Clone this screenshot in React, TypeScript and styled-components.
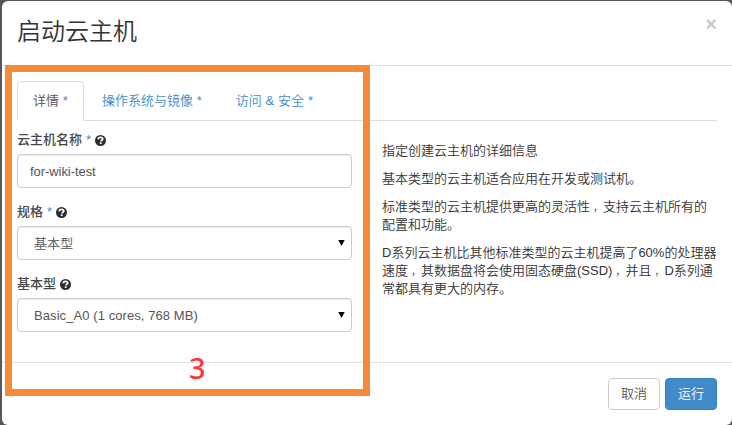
import React from 'react';
import styled, { createGlobalStyle } from 'styled-components';

const GlobalStyle = createGlobalStyle`
  *, *::before, *::after { box-sizing: border-box; }
  body {
    margin: 0;
    background: #58585a;
    overflow: hidden;
    color: #333;
    font: 350 13px/18px "Liberation Sans", "Noto Sans CJK SC", sans-serif;
  }
`;

const Backdrop = styled.div`
  height: 425px;
  padding: 1px 0 0 2px;
`;

const Modal = styled.section`
  position: relative;
  height: 424px;
  background: #fff;
  border-radius: 6px;
  display: flex;
  flex-direction: column;
`;

const Header = styled.header`
  height: 65px;
  flex: none;
  display: flex;
  justify-content: space-between;
  padding: 15px 15px 0;
  border-bottom: 1px solid #e2e2e2;
`;

const Title = styled.h3`
  margin: 0;
  font-size: 24px;
  line-height: 32px;
  font-weight: 350;
`;

const Close = styled.button`
  height: 18px;
  padding: 0;
  margin-top: -1px;
  border: 0;
  background: none;
  color: #c8c8c8;
  font: bold 19.5px/18px "Liberation Sans", sans-serif;
`;

const Body = styled.div`
  height: 297px;
  flex: none;
  padding: 15px 15px 0;
  border-bottom: 1px solid #e2e2e2;
`;

const Tabs = styled.nav`
  display: flex;
  gap: 2px;
  height: 40px;
  border-bottom: 1px solid #ddd;
`;

const Tab = styled.a<{ $active?: boolean }>`
  height: 40px;
  padding: 10px 15px 0;
  white-space: nowrap;
  word-spacing: 0.2px;
  border: 1px solid;
  border-color: ${p => (p.$active ? '#ddd #ddd #fff' : 'transparent')};
  border-radius: 4px 4px 0 0;
  background: ${p => (p.$active ? '#fff' : 'transparent')};
  color: ${p => (p.$active ? '#555' : '#428bca')};
`;

const Columns = styled.div`
  display: grid;
  grid-template-columns: 335px 335px;
  column-gap: 30px;
  padding-top: 10px;
`;

const Group = styled.div`
  height: 72px;
`;

const Label = styled.label`
  display: flex;
  align-items: center;
  gap: 4px;
  height: 18px;
  margin-bottom: 5px;
  font-weight: 500;
  color: #484848;
`;

const Star = styled.span`
  color: #428bca;
  font-weight: 400;
`;

const Field = styled.div<{ $select?: boolean }>`
  display: flex;
  align-items: center;
  justify-content: space-between;
  height: 34px;
  padding: 0 6px 0 ${p => (p.$select ? 16 : 12)}px;
  border: 1px solid #ccc;
  border-radius: 4px;
  box-shadow: inset 0 1px 1px rgba(0, 0, 0, 0.075);
  letter-spacing: ${p => (p.$select ? 0.08 : -0.06)}px;
  color: #555;
`;

const Value = styled.span`
  padding-top: 2px;
`;

const Description = styled.div`
  padding-top: 11px;
`;

const Paragraph = styled.p`
  margin: 0 0 10px;
  white-space: nowrap;
`;

const Comma = styled.span`
  padding-left: 3px;
  font-size: 10px;
  line-height: 1;
`;

const Footer = styled.footer`
  display: flex;
  justify-content: flex-end;
  gap: 5px;
  padding: 15px 15px 0;
`;

const Button = styled.button<{ $primary?: boolean }>`
  width: 52px;
  height: 32px;
  padding: 0;
  border: 1px solid ${p => (p.$primary ? '#357ebd' : '#ccc')};
  border-radius: 4px;
  background: ${p => (p.$primary ? '#428bca' : '#fff')};
  color: ${p => (p.$primary ? '#fff' : '#555')};
  font: inherit;
`;

const Highlight = styled.div`
  position: absolute;
  left: 3px;
  top: 64px;
  width: 365px;
  height: 331px;
  border: 7px solid #f78a38;
  pointer-events: none;
`;

const Step = styled.span`
  position: absolute;
  left: 177px;
  top: 280px;
  color: #ff3636;
  font: 500 29px/32px "Noto Sans", sans-serif;
`;

const Help = () => (
  <svg width="11" height="11" viewBox="0 0 11 11">
    <circle cx="5.5" cy="5.5" r="5.5" fill="#2d2d2d" />
    <path d="M3.2 4.3C3.3 2.8 4.2 2.3 5.5 2.3c1.3 0 2.2.7 2.2 1.7C7.7 5.2 6 5.2 6 6.6" fill="none" stroke="#fff" strokeWidth="1.8" />
    <path d="M4.8 7.4h1.8v1.6H4.8z" fill="#fff" />
  </svg>
);

const Arrow = () => (
  <svg width="7" height="6" viewBox="0 0 7 6">
    <path d="M.3 0h6.4L3.5 6z" fill="#000" />
  </svg>
);

const Line = ({ text }: { text: string }) => (
  <>
    {text.split('，').map((part, i) => (
      <React.Fragment key={part}>
        {i > 0 && <Comma>，</Comma>}
        {part}
      </React.Fragment>
    ))}
  </>
);

const TABS = ['详情', '操作系统与镜像', '访问 & 安全'];

const FIELDS = [
  { label: '云主机名称', required: true, value: 'for-wiki-test', select: false },
  { label: '规格', required: true, value: '基本型', select: true },
  { label: '基本型', required: false, value: 'Basic_A0 (1 cores, 768 MB)', select: true },
];

const DESCRIPTION = [
  ['指定创建云主机的详细信息'],
  ['基本类型的云主机适合应用在开发或测试机。'],
  ['标准类型的云主机提供更高的灵活性，支持云主机所有的', '配置和功能。'],
  ['D系列云主机比其他标准类型的云主机提高了60%的处理器', '速度，其数据盘将会使用固态硬盘(SSD)，并且，D系列通', '常都具有更大的内存。'],
];

export default function App() {
  return (
    <Backdrop>
      <GlobalStyle />
      <Modal>
        <Header>
          <Title>启动云主机</Title>
          <Close aria-label="关闭">×</Close>
        </Header>
        <Body>
          <Tabs>
            {TABS.map((name, i) => (
              <Tab key={name} $active={i === 0}>
                {name} <Star>*</Star>
              </Tab>
            ))}
          </Tabs>
          <Columns>
            <div>
              {FIELDS.map(f => (
                <Group key={f.label}>
                  <Label>
                    {f.label}
                    {f.required && <Star>*</Star>}
                    <Help />
                  </Label>
                  <Field $select={f.select}>
                    <Value>{f.value}</Value>
                    {f.select && <Arrow />}
                  </Field>
                </Group>
              ))}
            </div>
            <Description>
              {DESCRIPTION.map(lines => (
                <Paragraph key={lines[0]}>
                  {lines.map((line, i) => (
                    <React.Fragment key={line}>
                      {i > 0 && <br />}
                      <Line text={line} />
                    </React.Fragment>
                  ))}
                </Paragraph>
              ))}
            </Description>
          </Columns>
        </Body>
        <Footer>
          <Button>取消</Button>
          <Button $primary>运行</Button>
        </Footer>
        <Highlight>
          <Step>3</Step>
        </Highlight>
      </Modal>
    </Backdrop>
  );
}
